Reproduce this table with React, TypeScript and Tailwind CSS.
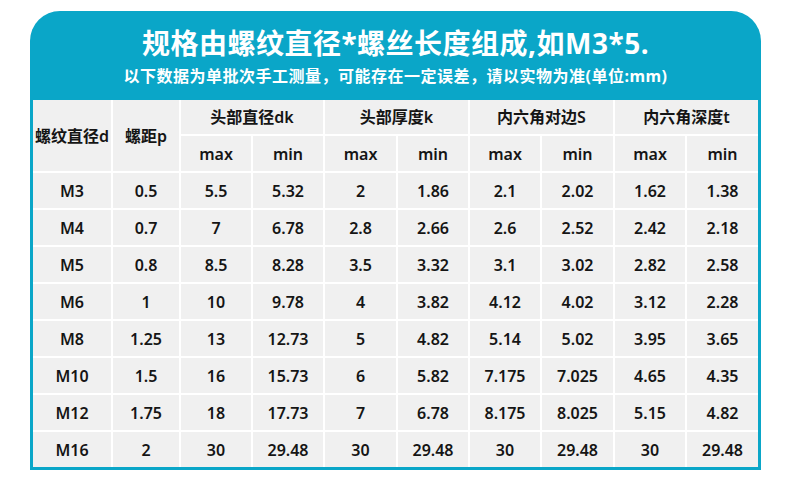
import React from "react";

const rows: string[][] = [
  ["M3", "0.5", "5.5", "5.32", "2", "1.86", "2.1", "2.02", "1.62", "1.38"],
  ["M4", "0.7", "7", "6.78", "2.8", "2.66", "2.6", "2.52", "2.42", "2.18"],
  ["M5", "0.8", "8.5", "8.28", "3.5", "3.32", "3.1", "3.02", "2.82", "2.58"],
  ["M6", "1", "10", "9.78", "4", "3.82", "4.12", "4.02", "3.12", "2.28"],
  ["M8", "1.25", "13", "12.73", "5", "4.82", "5.14", "5.02", "3.95", "3.65"],
  ["M10", "1.5", "16", "15.73", "6", "5.82", "7.175", "7.025", "4.65", "4.35"],
  ["M12", "1.75", "18", "17.73", "7", "6.78", "8.175", "8.025", "5.15", "4.82"],
  ["M16", "2", "30", "29.48", "30", "29.48", "30", "29.48", "30", "29.48"],
];

const cell = "bg-[#f0f0f0] flex items-center justify-center";

export default function App() {
  return (
    <div
      className="w-[790px] h-[480px] bg-white overflow-hidden pt-[11px] pl-[30px]"
      style={{ fontFamily: '"Noto Sans", "Noto Sans CJK SC", sans-serif' }}
    >
      <div className="w-[731px] bg-[#0aa6c8] rounded-t-[30px] px-[3px] pb-[3px]">
        <div className="flex flex-col items-center text-white pt-[15px] pb-[13px]">
          <div className="text-[28px] leading-[34px] font-bold tracking-[0.5px]">
            规格由螺纹直径*螺丝长度组成,如M3*5.
          </div>
          <div className="mt-[5px] text-[16px] leading-[22px] font-bold tracking-[0.5px]">
            以下数据为单批次手工测量，可能存在一定误差，请以实物为准(单位:mm)
          </div>
        </div>
        <div
          className="grid bg-white gap-[2px] grid-cols-[78px_66px_70px_70px_71px_70px_70px_71px_70px_71px] grid-rows-[34px_35px_repeat(8,35px)] text-[16px] font-semibold text-[#151515]"
        >
          <div className={`${cell} row-span-2`}>螺纹直径d</div>
          <div className={`${cell} row-span-2`}>螺距p</div>
          <div className={`${cell} col-span-2`}>头部直径dk</div>
          <div className={`${cell} col-span-2`}>头部厚度k</div>
          <div className={`${cell} col-span-2`}>内六角对边S</div>
          <div className={`${cell} col-span-2`}>内六角深度t</div>
          <div className={cell}>max</div>
          <div className={cell}>min</div>
          <div className={cell}>max</div>
          <div className={cell}>min</div>
          <div className={cell}>max</div>
          <div className={cell}>min</div>
          <div className={cell}>max</div>
          <div className={cell}>min</div>
          {rows.map((r, i) =>
            r.map((v, j) => (
              <div key={`${i}-${j}`} className={cell}>
                {v}
              </div>
            ))
          )}
        </div>
      </div>
    </div>
  );
}
